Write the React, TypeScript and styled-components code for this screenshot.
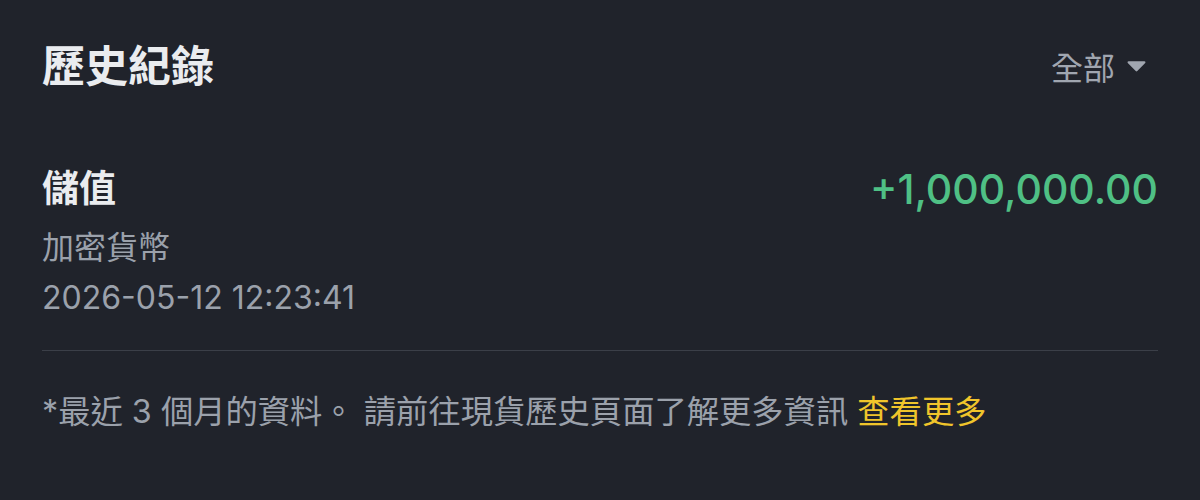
import { createGlobalStyle, styled } from "styled-components";

const GlobalStyle = createGlobalStyle`
  html, body {
    margin: 0;
    padding: 0;
    background: #20232b;
  }
  body {
    font-family: Inter, "Noto Sans CJK TC", sans-serif;
    -webkit-font-smoothing: antialiased;
  }
`

const Panel = styled.div`
  width: 1200px;
  height: 500px;
  box-sizing: border-box;
  padding: 40px 42px 0 42px;
  background: #20232b;
  color: #eaecef;
  display: flex;
  flex-direction: column;
`

const Header = styled.div`
  display: flex;
  justify-content: space-between;
  align-items: center;
  height: 52px;
`

const Title = styled.h1`
  margin: 0;
  font-size: 43px;
  font-weight: 700;
  line-height: 50px;
  color: #eaecef;
`

const Filter = styled.button`
  display: flex;
  align-items: center;
  gap: 12px;
  padding: 0 12px 0 0;
  border: none;
  background: none;
  font-family: inherit;
  font-size: 32px;
  color: #a0a6b0;
  cursor: pointer;
`

const Record = styled.div`
  margin-top: 72px;
  display: flex;
  justify-content: space-between;
  align-items: flex-start;
`

const Info = styled.div`
  display: flex;
  flex-direction: column;
`

const Kind = styled.div`
  font-size: 37px;
  font-weight: 700;
  line-height: 50px;
  color: #eaecef;
`

const Meta = styled.div<{ $gap: number }>`
  margin-top: ${(p) => p.$gap}px;
  font-size: 32px;
  line-height: 40px;
  color: #9ba1ab;
`

const Amount = styled.div<{ $positive: boolean }>`
  font-size: 41px;
  font-weight: 500;
  line-height: 50px;
  color: ${(p) => (p.$positive ? "#4fc085" : "#f6465d")};
`

const Divider = styled.hr`
  margin: 32px 0 0 0;
  border: none;
  height: 1px;
  background: #3b3f48;
`

const Note = styled.p`
  margin: 41px 0 0 0;
  font-size: 32.3px;
  line-height: 40px;
  color: #9ba1ab;
`

const MoreLink = styled.a`
  color: #f0c52b;
  text-decoration: none;
  cursor: pointer;
`

function Caret() {
  return (
    <svg width="19" height="12" viewBox="0 0 18 11">
      <path d="M1.5 1h15a1 1 0 0 1 .75 1.66l-7.5 7.6a1 1 0 0 1-1.5 0L.75 2.66A1 1 0 0 1 1.5 1z" fill="#a0a6b0" />
    </svg>
  );
}

export default function App() {
  return (
    <>
      <GlobalStyle />
      <Panel>
        <Header>
          <Title>歷史紀錄</Title>
          <Filter>
            全部
            <Caret />
          </Filter>
        </Header>
        <Record>
          <Info>
            <Kind>儲值</Kind>
            <Meta $gap={14}>加密貨幣</Meta>
            <Meta $gap={10}>2026-05-12 12:23:41</Meta>
          </Info>
          <Amount $positive>+1,000,000.00</Amount>
        </Record>
        <Divider />
        <Note>
          *最近 3 個月的資料。 請前往現貨歷史頁面了解更多資訊 <MoreLink>查看更多</MoreLink>
        </Note>
      </Panel>
    </>
  );
}
